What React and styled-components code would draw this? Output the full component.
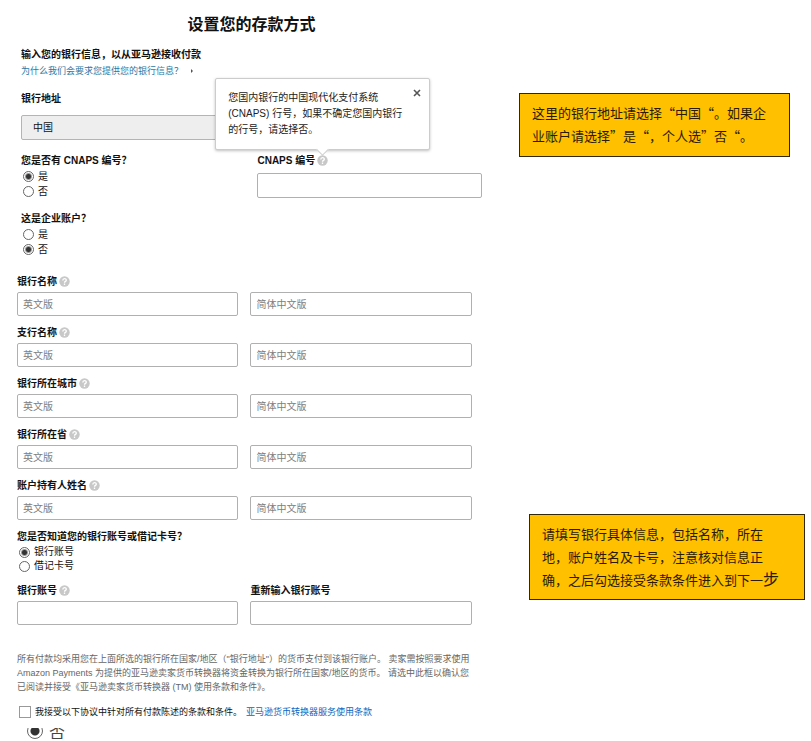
import React from "react";
import styled, { createGlobalStyle } from "styled-components";

const GlobalStyle = createGlobalStyle`
  * {
    box-sizing: border-box;
  }
  body {
    margin: 0;
    background: #fff;
    color: #111;
    font-family: "Liberation Sans", "Noto Sans CJK SC", sans-serif;
    font-size: 10px;
    line-height: 16px;
  }
  input, select, button {
    font-family: inherit;
    font-size: inherit;
    color: inherit;
  }
`;

const Page = styled.div`
  display: grid;
  grid-template-columns: 5fr 3fr;
`;

const Form = styled.form`
  padding: 13px 35px 0 17px;
`;

const Title = styled.h1`
  margin: 0 0 10px;
  padding-left: 14px;
  font-size: 16px;
  line-height: 24px;
  text-align: center;
`;

const TopSection = styled.section`
  margin: 0 -10px 17px 4px;
`;

const Heading = styled.h2`
  margin: 0;
  font-size: 10px;
  line-height: 16px;
`;

const WhyLink = styled.a`
  display: flex;
  align-items: center;
  gap: 8px;
  width: fit-content;
  font-size: 9px;
  color: #2a78a4;
  text-decoration: none;
  &::after {
    content: "";
    border: 2px solid transparent;
    border-left-color: #555;
  }
`;

const Columns = styled.div`
  display: grid;
  grid-template-columns: 1fr 1fr;
  column-gap: 12px;
`;

const AddressField = styled.div`
  margin: 12px 0 13px;
`;

const Label = styled.label`
  display: block;
  font-weight: bold;
`;

const LabelRow = styled.div`
  display: flex;
  align-items: center;
  gap: 2px;
  height: 16px;
`;

const Select = styled.select`
  display: block;
  appearance: none;
  width: 50%;
  height: 25px;
  margin-top: 8px;
  padding: 0 11px;
  border: 1px solid #b4b4b4;
  border-radius: 2px;
  background: #eee;
`;

const Input = styled.input`
  display: block;
  width: 100%;
  height: ${({ $tall }) => ($tall ? 25 : 24)}px;
  margin-top: ${({ $tall }) => ($tall ? 4 : 2)}px;
  padding: 0 5px;
  border: 1px solid #b0b0b0;
  border-radius: 2px;
  background: #fff;
  &::placeholder {
    color: #808080;
  }
`;

const FieldRow = styled(Columns)`
  margin-bottom: 9px;
  align-items: end;
`;

const Choices = styled.fieldset`
  margin: 0;
  padding: 0;
  border: 0;
  min-width: 0;
`;

const Legend = styled.legend`
  padding: 0;
  font-weight: bold;
`;

const Choice = styled.label`
  display: flex;
  align-items: center;
  gap: 4px;
  height: ${({ $tight }) => ($tight ? 14 : 15)}px;
  padding-left: 2px;
`;

const Radio = styled.input`
  appearance: none;
  flex: none;
  width: 11px;
  height: 11px;
  margin: 0;
  border: 1px solid #666;
  border-radius: 50%;
  background: #fff;
  &:checked {
    background: radial-gradient(circle, #333 0 2px, #fff 4px);
  }
`;

const BusinessChoices = styled(Choices)`
  margin-top: 12px;
`;

const AccountChoices = styled(Choices)`
  margin-bottom: 10px;
`;

const HelpButton = styled.button`
  display: flex;
  flex: none;
  width: 11px;
  height: 11px;
  margin-bottom: 2px;
  padding: 0;
  border: 0;
  background: none;
`;

const HelpAnchor = styled.div`
  position: relative;
  display: flex;
`;

const Tooltip = styled.div`
  position: absolute;
  right: -102px;
  bottom: 18px;
  width: 215px;
  padding: 11px 26px 11px 12px;
  border: 1px solid #ccc;
  border-radius: 2px;
  background: #fff;
  box-shadow: 0 1px 3px rgba(0, 0, 0, 0.25);
  color: #222;
  &::after {
    content: "";
    position: absolute;
    left: 102px;
    bottom: -5px;
    width: 8px;
    height: 8px;
    background: #fff;
    border: solid #ccc;
    border-width: 0 1px 1px 0;
    transform: rotate(45deg);
  }
`;

const CloseButton = styled.button`
  position: absolute;
  top: 10px;
  right: 8px;
  display: flex;
  padding: 0;
  border: 0;
  background: none;
`;

const Terms = styled.p`
  margin: 27px -10px 10px 0;
  color: #666;
  font-size: 9px;
  line-height: 14px;
`;

const Agreement = styled.div`
  display: flex;
  align-items: center;
  gap: 4px;
  height: 16px;
  padding-left: 2px;
  font-size: 9px;
  a {
    color: #0a66c0;
    text-decoration: none;
  }
`;

const Checkbox = styled.input`
  appearance: none;
  flex: none;
  width: 12px;
  height: 12px;
  margin: 0;
  border: 1px solid #999;
  background: #fff;
`;

const CutOffChoice = styled.label`
  display: flex;
  align-items: flex-end;
  gap: 6px;
  height: 11px;
  margin-top: 8px;
  padding-left: 10px;
  overflow: hidden;
  font-size: 16px;
  line-height: 12px;
  color: #444;
`;

const LargeRadio = styled(Radio)`
  width: 16px;
  height: 16px;
  &:checked {
    background: radial-gradient(circle, #333 0 4px, #fff 5px);
  }
`;

const Notes = styled.aside`
  padding: 93px 6px 0 12px;
`;

const Note = styled.p`
  margin: 0;
  padding: 7px 12px 8px;
  border: 1px solid #33270a;
  background: #ffc000;
  color: #2b1a00;
  font-family: "Noto Sans CJK SC", sans-serif;
  font-size: 13px;
  line-height: 23px;
  text-spacing-trim: space-all;
`;

const AddressNote = styled(Note)`
  margin-right: 15px;
  padding-bottom: 9px;
`;

const DetailsNote = styled(Note)`
  margin: 357px 0 0 10px;
  big {
    font-size: 16px;
    line-height: 20px;
  }
`;

const bankFields = [
  { id: "bank", label: "银行名称" },
  { id: "branch", label: "支行名称" },
  { id: "city", label: "银行所在城市" },
  { id: "province", label: "银行所在省" },
  { id: "holder", label: "账户持有人姓名" },
];

const Help = () => (
  <HelpButton type="button" aria-label="帮助">
    <svg width="11" height="11" viewBox="0 0 11 11" fill="none">
      <circle cx="5.5" cy="5.5" r="5.2" fill="#c8c8c8" />
      <path d="M3.8 4.5c0-2.4 3.5-2.3 3.5-.3 0 1.3-1.8 1.1-1.8 2.5M5.5 7.6v1.3" stroke="#fff" strokeWidth="1.3" />
    </svg>
  </HelpButton>
);

const FieldLabel = ({ id, label }) => (
  <LabelRow>
    <Label htmlFor={id}>{label}</Label>
    <Help />
  </LabelRow>
);

const App = () => {
  return (
    <>
      <GlobalStyle />
      <Page>
        <Form>
          <Title>设置您的存款方式</Title>
          <TopSection>
            <Heading>输入您的银行信息，以从亚马逊接收付款</Heading>
            <WhyLink href="#why">为什么我们会要求您提供您的银行信息？</WhyLink>
            <AddressField>
              <Label htmlFor="country">银行地址</Label>
              <Select id="country" defaultValue="cn">
                <option value="cn">中国</option>
              </Select>
            </AddressField>
            <Columns>
              <Choices>
                <Legend>您是否有 CNAPS 编号？</Legend>
                <Choice><Radio type="radio" name="cnaps" defaultChecked />是</Choice>
                <Choice><Radio type="radio" name="cnaps" />否</Choice>
              </Choices>
              <div>
                <LabelRow>
                  <Label htmlFor="cnapsCode">CNAPS 编号</Label>
                  <HelpAnchor>
                    <Help />
                    <Tooltip role="tooltip">
                      您国内银行的中国现代化支付系统 (CNAPS) 行号，如果不确定您国内银行的行号，请选择否。
                      <CloseButton type="button" aria-label="关闭">
                        <svg width="8" height="8" viewBox="0 0 8 8">
                          <path d="M1 1l6 6M7 1L1 7" stroke="#555" strokeWidth="1.6" />
                        </svg>
                      </CloseButton>
                    </Tooltip>
                  </HelpAnchor>
                </LabelRow>
                <Input id="cnapsCode" $tall />
              </div>
            </Columns>
            <BusinessChoices>
              <Legend>这是企业账户？</Legend>
              <Choice><Radio type="radio" name="business" />是</Choice>
              <Choice><Radio type="radio" name="business" defaultChecked />否</Choice>
            </BusinessChoices>
          </TopSection>

          {bankFields.map(({ id, label }) => (
            <FieldRow key={id}>
              <div>
                <FieldLabel id={id} label={label} />
                <Input id={id} placeholder="英文版" />
              </div>
              <Input aria-label={label} placeholder="简体中文版" />
            </FieldRow>
          ))}

          <AccountChoices>
            <Legend>您是否知道您的银行账号或借记卡号？</Legend>
            <Choice $tight><Radio type="radio" name="account" defaultChecked />银行账号</Choice>
            <Choice $tight><Radio type="radio" name="account" />借记卡号</Choice>
          </AccountChoices>
          <Columns>
            <div>
              <FieldLabel id="number" label="银行账号" />
              <Input id="number" />
            </div>
            <div>
              <Label htmlFor="repeat">重新输入银行账号</Label>
              <Input id="repeat" />
            </div>
          </Columns>

          <Terms>
            所有付款均采用您在上面所选的银行所在国家/地区（"银行地址"）的货币支付到该银行账户。 卖家需按照要求使用
            <br />
            Amazon Payments 为提供的亚马逊卖家货币转换器将资金转换为银行所在国家/地区的货币。 请选中此框以确认您
            <br />
            已阅读并接受《亚马逊卖家货币转换器 (TM) 使用条款和条件》。
          </Terms>
          <Agreement>
            <Checkbox type="checkbox" id="agree" />
            <label htmlFor="agree">我接受以下协议中针对所有付款陈述的条款和条件。</label>
            <a href="#terms">亚马逊货币转换器服务使用条款</a>
          </Agreement>
          <CutOffChoice><LargeRadio type="radio" name="more" defaultChecked />否</CutOffChoice>
        </Form>
        <Notes>
          <AddressNote>
            这里的银行地址请选择“中国“。如果企业账户请选择”是“，个人选”否“。
          </AddressNote>
          <DetailsNote>
            请填写银行具体信息，包括名称，所在
            <br />
            地，账户姓名及卡号，注意核对信息正
            <br />
            确，之后勾选接受条款条件进入到下一<big>步</big>
          </DetailsNote>
        </Notes>
      </Page>
    </>
  );
};

export default App;
